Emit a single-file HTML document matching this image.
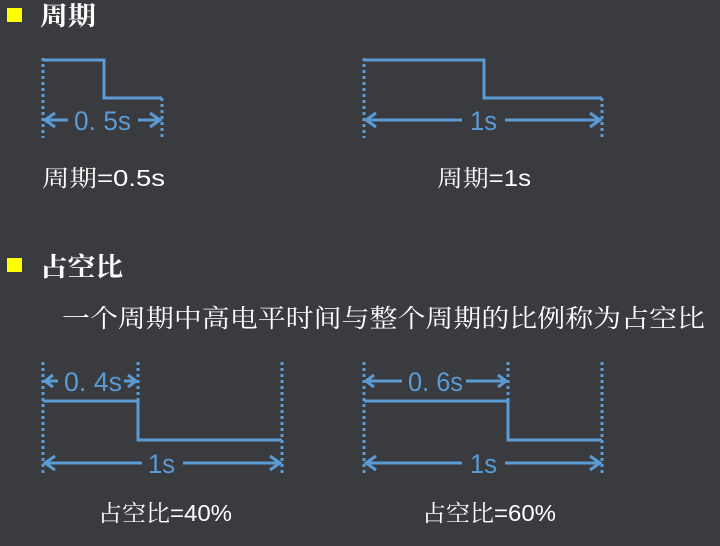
<!DOCTYPE html>
<html><head><meta charset="utf-8"><style>
html,body{margin:0;padding:0;background:#3a3b3f;width:720px;height:546px;overflow:hidden}
svg{display:block}
.w{fill:#fff;font-family:"Liberation Sans","Noto Serif CJK SC","Noto Sans CJK SC",sans-serif}
.b{fill:#5b9bd5;font-family:"Liberation Sans","Noto Sans CJK SC",sans-serif;font-size:27px}
</style></head><body>
<svg width="720" height="546" viewBox="0 0 720 546">
<rect x="7" y="8" width="15" height="14" fill="#ffff00"/>
<text x="40" y="25" class="w" font-size="26" font-weight="bold" font-family="Noto Serif CJK SC,serif" textLength="56" lengthAdjust="spacingAndGlyphs">周期</text>
<rect x="7" y="258" width="15" height="14" fill="#ffff00"/>
<text x="40" y="276" class="w" font-size="26" font-weight="bold" font-family="Noto Serif CJK SC,serif" textLength="83" lengthAdjust="spacingAndGlyphs">占空比</text>
<text x="62" y="327" class="w" font-size="25" font-family="Noto Serif CJK SC,serif" textLength="643" lengthAdjust="spacingAndGlyphs">一个周期中高电平时间与整个周期的比例称为占空比</text>

<g fill="none" stroke="#5b9bd5" stroke-width="3">
<path d="M43,60 H104 V98 H162"/>
<path d="M43,58 V138 M162,98 V138" stroke-dasharray="3,3"/>
<path d="M45,120 H68 M138,120 H160 M55,113 L45,120 L55,127 M150,113 L160,120 L150,127"/>
<path d="M364,60 H484 V98 H602"/>
<path d="M364,58 V138 M602,98 V138" stroke-dasharray="3,3"/>
<path d="M366,120 H462 M505,120 H600 M376,113 L366,120 L376,127 M590,113 L600,120 L590,127"/>
<path d="M43,401 H138 V440 H282"/>
<path d="M43,362 V475 M138,362 V401 M282,362 V475" stroke-dasharray="3,3"/>
<path d="M45,381 H58 M124,381 H136 M53,375 L45,381 L53,387 M128,375 L136,381 L128,387"/>
<path d="M45,463 H142 M183,463 H280 M55,456 L45,463 L55,470 M270,456 L280,463 L270,470"/>
<path d="M364,401 H508 V440 H602"/>
<path d="M364,362 V475 M508,362 V401 M602,362 V475" stroke-dasharray="3,3"/>
<path d="M366,381 H402 M466,381 H506 M374,375 L366,381 L374,387 M498,375 L506,381 L498,387"/>
<path d="M366,463 H462 M505,463 H600 M376,456 L366,463 L376,470 M590,456 L600,463 L590,470"/>
</g>
<text x="74" y="130" class="b" textLength="57" lengthAdjust="spacingAndGlyphs">0. 5s</text>
<text x="470" y="130" class="b" textLength="27" lengthAdjust="spacingAndGlyphs">1s</text>
<text x="64" y="391" class="b" textLength="58" lengthAdjust="spacingAndGlyphs">0. 4s</text>
<text x="148" y="473" class="b" textLength="27" lengthAdjust="spacingAndGlyphs">1s</text>
<text x="408" y="391" class="b" textLength="55" lengthAdjust="spacingAndGlyphs">0. 6s</text>
<text x="470" y="473" class="b" textLength="27" lengthAdjust="spacingAndGlyphs">1s</text>

<text x="42" y="186" class="w" font-size="23" textLength="123" lengthAdjust="spacingAndGlyphs">周期=0.5s</text>
<text x="437" y="186" class="w" font-size="23" textLength="94" lengthAdjust="spacingAndGlyphs">周期=1s</text>
<text x="98" y="521" class="w" font-size="23" textLength="134" lengthAdjust="spacingAndGlyphs">占空比=40%</text>
<text x="422" y="521" class="w" font-size="23" textLength="134" lengthAdjust="spacingAndGlyphs">占空比=60%</text>
</svg>
</body></html>
